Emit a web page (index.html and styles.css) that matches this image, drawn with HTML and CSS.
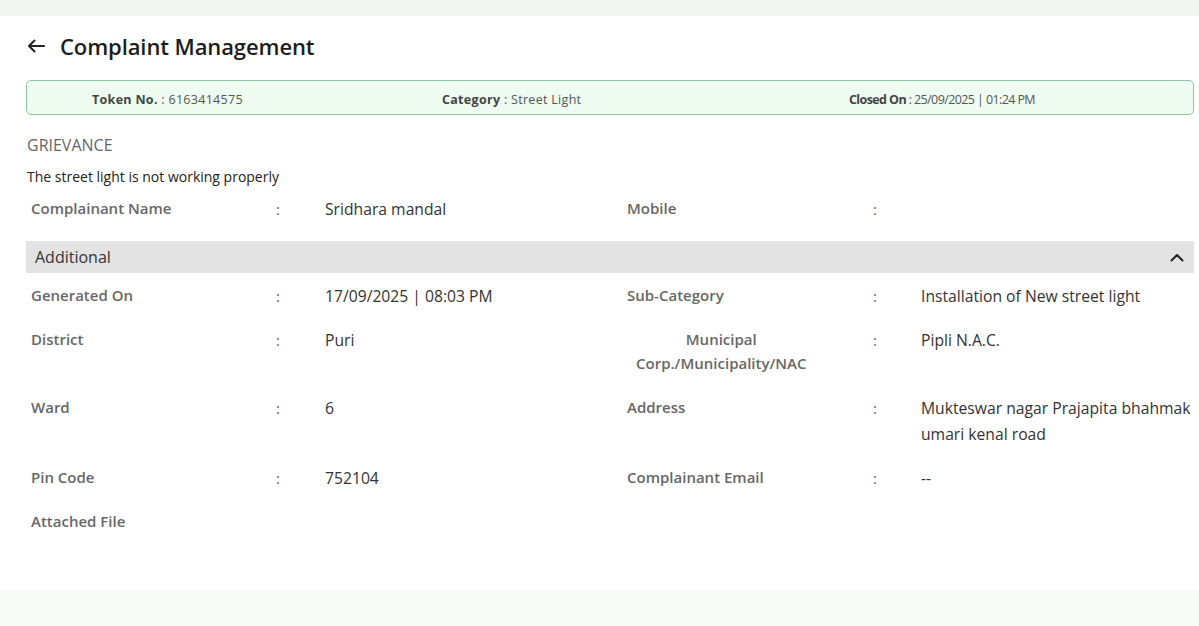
FILE: index.html
```html
<!DOCTYPE html>
<html>
<head>
<meta charset="utf-8">
<link rel="stylesheet" href="styles.css">
</head>
<body>
<div class="topband"></div>
<main class="card">
  <header class="head">
    <svg class="back" width="18" height="14" viewBox="0 0 18 14"><path d="M17 7H2M7.5 1.5L2 7l5.5 5.5" fill="none" stroke="#222" stroke-width="2" stroke-linecap="round" stroke-linejoin="round"/></svg>
    <h1 class="title">Complaint Management</h1>
  </header>
  <section class="status">
    <div class="stat"><b>Token No.</b> : 6163414575</div>
    <div class="stat"><b>Category</b> : Street Light</div>
    <div class="stat"><b>Closed On</b> : 25/09/2025 | 01:24 PM</div>
  </section>
  <h2 class="sec">GRIEVANCE</h2>
  <p class="desc">The street light is not working properly</p>
  <div class="row">
    <div class="lbl">Complainant Name</div><div class="col">:</div><div class="val">Sridhara mandal</div>
    <div class="lbl">Mobile</div><div class="col">:</div><div class="val"></div>
  </div>
  <div class="bar">
    <span>Additional</span>
    <svg width="14" height="9" viewBox="0 0 14 9"><path d="M1.5 7.5L7 2l5.5 5.5" fill="none" stroke="#222" stroke-width="2" stroke-linecap="round" stroke-linejoin="round"/></svg>
  </div>
  <div class="rows">
    <div class="row">
      <div class="lbl">Generated On</div><div class="col">:</div><div class="val">17/09/2025 | 08:03 PM</div>
      <div class="lbl">Sub-Category</div><div class="col">:</div><div class="val">Installation of New street light</div>
    </div>
    <div class="row">
      <div class="lbl">District</div><div class="col">:</div><div class="val">Puri</div>
      <div class="lbl"><span class="center">Municipal<br>Corp./Municipality/NAC</span></div><div class="col">:</div><div class="val">Pipli N.A.C.</div>
    </div>
    <div class="row">
      <div class="lbl">Ward</div><div class="col">:</div><div class="val">6</div>
      <div class="lbl">Address</div><div class="col">:</div><div class="val">Mukteswar nagar Prajapita bhahmak umari kenal road</div>
    </div>
    <div class="row">
      <div class="lbl">Pin Code</div><div class="col">:</div><div class="val">752104</div>
      <div class="lbl">Complainant Email</div><div class="col">:</div><div class="val">--</div>
    </div>
    <div class="row">
      <div class="lbl">Attached File</div>
    </div>
  </div>
</main>
<div class="bottomband"></div>
</body>
</html>
```
FILE: styles.css
```css
* { box-sizing: border-box; }
html, body { margin: 0; padding: 0; }
body {
  background: #f8faf8;
  font-family: "Open Sans", "Noto Sans", sans-serif;
  color: #333;
  width: 1199px;
  height: 626px;
  overflow: hidden;
}
.topband { height: 16px; background: #f3f7f3; }
.card {
  background: #fff;
  height: 574px;
  padding: 15px 5px 0 26px;
}
.head {
  display: flex;
  align-items: center;
  height: 30px;
}
.back { margin-left: 1px; }
.title {
  margin: 0 0 0 15px;
  font-size: 22px;
  font-weight: 600;
  color: #1d1d1d;
  letter-spacing: -0.1px;
}
.status {
  margin-top: 19px;
  height: 35px;
  border: 1px solid #8fc4a2;
  border-radius: 5px;
  background: #eefcf1;
  display: grid;
  grid-template-columns: 350px 407px auto;
  align-items: center;
  padding: 4px 0 0 65px;
  font-size: 12.5px;
  color: #555;
}
.stat b { color: #444; font-weight: 700; }
.stat:nth-child(1), .stat:nth-child(2) { letter-spacing: 0.3px; }
.stat:nth-child(3) { letter-spacing: -0.6px; }
.sec {
  margin: 20px 0 0 1px;
  font-size: 16px;
  line-height: 20px;
  font-weight: 500;
  color: #666;
}
.desc {
  margin: 12px 0 0 1px;
  font-size: 14px;
  line-height: 20px;
  color: #222;
}
.row {
  display: grid;
  grid-template-columns: 245px 49px 302px 246px 48px 1fr;
  padding-left: 5px;
  padding-bottom: 18px;
}
.rows { padding-top: 10px; }
.desc + .row { margin-top: 9px; padding-bottom: 19px; }
.lbl {
  font-size: 15px;
  line-height: 24px;
  font-weight: 600;
  color: #676767;
}
.col {
  font-size: 15px;
  line-height: 26px;
  color: #666;
}
.val {
  font-size: 15.7px;
  line-height: 26px;
  color: #333;
}
.center {
  display: inline-block;
  text-align: center;
  margin-left: 9px;
  margin-bottom: 2px;
}
.bar {
  height: 32px;
  background: #e3e3e3;
  display: flex;
  align-items: center;
  justify-content: space-between;
  padding: 0 10px 0 9px;
  font-size: 16px;
  color: #333;
}
.bottomband { height: 36px; background: #f8faf8; }
```
